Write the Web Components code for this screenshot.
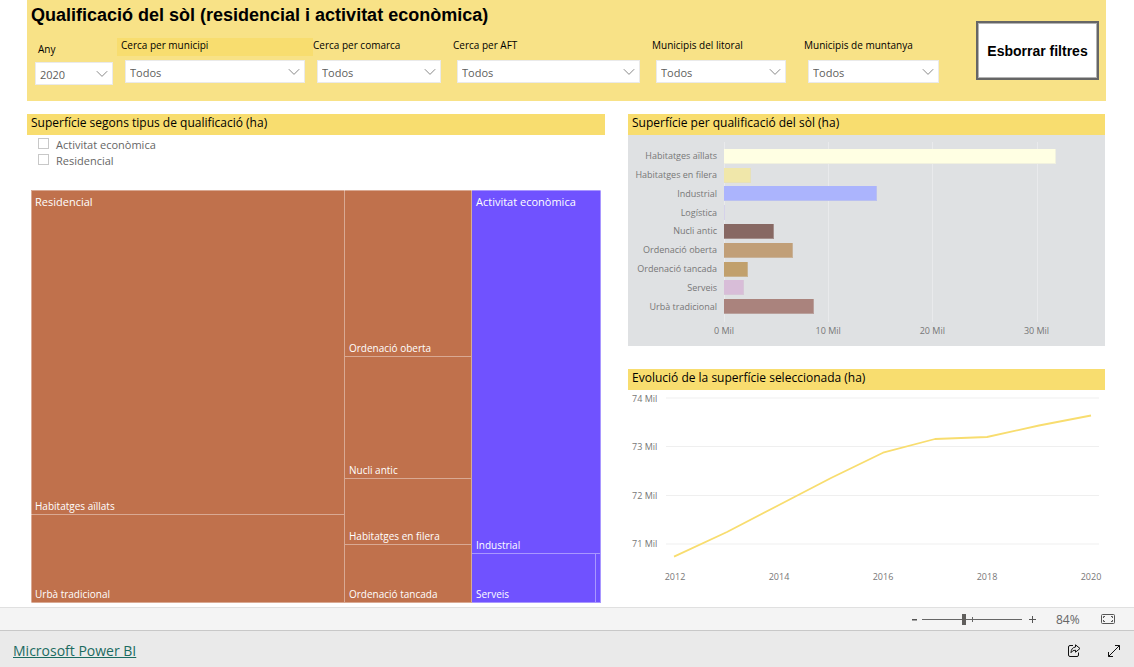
<!DOCTYPE html>
<html lang="ca">
<head>
<meta charset="utf-8">
<title>Qualificació del sòl</title>
<style>
  html, body { margin: 0; }
  body { font-family: "Open Sans", "Noto Sans", sans-serif; background: #fff; color: #000; }
</style>
</head>
<body>
<report-app></report-app>

<template id="t-report-app">
  <style>
    :host { display: flex; flex-direction: column; min-height: 100vh; }
    main { flex: 1; padding: 0 28px 4px 27px; display: flex; flex-direction: column; gap: 13px; }
    .panels { flex: 1; display: grid; grid-template-columns: 578fr 479fr; gap: 22px; }
    .right { display: flex; flex-direction: column; gap: 23px; margin: 0 1px; }
    line-chart { flex: 1; }
  </style>
  <main>
    <report-header></report-header>
    <div class="panels">
      <tree-map></tree-map>
      <div class="right">
        <bar-chart></bar-chart>
        <line-chart></line-chart>
      </div>
    </div>
  </main>
  <zoom-bar></zoom-bar>
  <brand-bar></brand-bar>
</template>

<template id="t-report-header">
  <style>
    :host { display: flex; background: #f8e287; padding: 0 7px 0 0; height: 101px; }
    .left { flex: 1; min-width: 0; }
    h1 { margin: 0; padding: 0 4px; height: 38px; font: 700 18px/31px "Liberation Sans", Arial, sans-serif; white-space: nowrap; box-sizing: border-box; }
    .filters { display: grid; grid-template-columns: 90fr 196fr 140fr 199fr 152fr 135fr; }
    .any { --start: 8px; --end: 4px; --label-start: 11px; --label-line: 18px; margin-top: 2px; }
    .mun { --start: 8px; --end: 8px; --label-start: 4px; --label-bg: #f8dd6f; }
    .lit { --end: 18px; }
    .last { --end: 0px; }
    button { width: 123px; height: 59px; margin: 21px 0 0 37px; padding: 0; background: #fff; border: 2px solid #666; box-shadow: inset 0 0 0 1px #b3b3b3; font: 700 14px "Liberation Sans", Arial, sans-serif; color: #000; white-space: nowrap; }
  </style>
  <div class="left">
    <h1>Qualificació del sòl (residencial i activitat econòmica)</h1>
    <div class="filters">
      <filter-select class="any" label="Any" value="2020"></filter-select>
      <filter-select class="mun" label="Cerca per municipi" value="Todos"></filter-select>
      <filter-select label="Cerca per comarca" value="Todos"></filter-select>
      <filter-select label="Cerca per AFT" value="Todos"></filter-select>
      <filter-select class="lit" label="Municipis del litoral" value="Todos"></filter-select>
      <filter-select class="last" label="Municipis de muntanya" value="Todos"></filter-select>
    </div>
  </div>
  <button type="button">Esborrar filtres</button>
</template>

<template id="t-filter-select">
  <style>
    :host { display: block; min-width: 0; }
    label { display: block; height: 18px; line-height: var(--label-line, 14px); font-size: 10px; padding-left: var(--label-start, 0px); background: var(--label-bg, none); white-space: nowrap; }
    .box { display: grid; margin: 4px var(--end, 12px) 0 var(--start, 4px); }
    select, svg { grid-area: 1 / 1; }
    select { appearance: none; width: 100%; height: 23px; margin: 0; padding: 1px 20px 0 4px; border: 1px solid #eaeaea; border-radius: 0; background: #fff; color: #605e5c; font: 11px "Open Sans", "Noto Sans", sans-serif; }
    svg { justify-self: end; align-self: center; margin-right: 5px; pointer-events: none; }
  </style>
  <label for="s"></label>
  <div class="box">
    <select id="s"></select>
    <svg width="12" height="8" viewBox="0 0 12 8" fill="none" stroke="#888"><path d="M.8 1.2 6 6.4 11.2 1.2"/></svg>
  </div>
</template>

<template id="t-panel-title">
  <style>
    :host { display: block; height: 21px; background: #f8dd6f; }
    h2 { margin: 0; padding-left: 4px; font-size: 12px; line-height: 18px; font-weight: 400; white-space: nowrap; }
  </style>
  <h2><slot></slot></h2>
</template>

<template id="t-tree-map">
  <style>
    :host { display: flex; flex-direction: column; }
    .checks { box-sizing: border-box; padding: 2px 11px 0; height: 55px; font-size: 11px; line-height: 16px; color: #666; }
    .checks label { display: flex; align-items: center; gap: 7px; }
    input { appearance: none; width: 11px; height: 11px; margin: 0 0 4px; border: 1px solid #c8c8c8; background: #fff; }
    .map { flex: 1; margin: 0 4px; display: grid; grid-template-columns: 314fr 127fr 129fr; color: #fff; font-size: 10px; line-height: 12px; box-shadow: inset 1px 1px #dfb8a6; }
    .res { background: #c0714c; }
    .act { background: #7052ff; }
    .col { display: grid; min-height: 0; box-shadow: inset 0 1px rgba(255,255,255,.4); }
    .first { box-shadow: inset 1px 1px rgba(255,255,255,.4); }
    .tile { min-height: 0; min-width: 0; display: flex; flex-direction: column; justify-content: flex-end; padding: 6px 4px 2px; border: solid rgba(255,255,255,.4); border-width: 0 1px 1px 0; white-space: nowrap; }
    .tile b { font-weight: 400; font-size: 11px; margin-bottom: auto; }
    .row { min-height: 0; display: grid; grid-template-columns: 124fr 5fr; }
    .logistics { padding: 0; }
  </style>
  <panel-title>Superfície segons tipus de qualificació (ha)</panel-title>
  <div class="checks">
    <label><input type="checkbox">Activitat econòmica</label>
    <label><input type="checkbox">Residencial</label>
  </div>
  <div class="map">
    <div class="col res first" style="grid-template-rows:325fr 88fr">
      <div class="tile"><b>Residencial</b>Habitatges aïllats</div>
      <div class="tile">Urbà tradicional</div>
    </div>
    <div class="col res" style="grid-template-rows:167fr 122fr 66fr 58fr">
      <div class="tile">Ordenació oberta</div>
      <div class="tile">Nucli antic</div>
      <div class="tile">Habitatges en filera</div>
      <div class="tile">Ordenació tancada</div>
    </div>
    <div class="col act" style="grid-template-rows:364fr 49fr">
      <div class="tile"><b>Activitat econòmica</b>Industrial</div>
      <div class="row">
        <div class="tile">Serveis</div>
        <div class="tile logistics"></div>
      </div>
    </div>
  </div>
</template>

<template id="t-bar-chart">
  <style>
    :host { display: flex; flex-direction: column; height: 232px; background: #dfe1e3; }
    .chart { flex: 1; display: grid; grid-template: 180px 18px / 96px 1fr; padding: 7px 6px 0 0; font-size: 9px; color: #777; }
    .rows { grid-area: 1 / 1 / 2 / 3; display: grid; grid-template-rows: repeat(9, 1fr); margin: 5px 0 6px; }
    .row { display: grid; grid-template-columns: 96px 1fr; align-items: center; line-height: 12px; min-height: 0; }
    .row span { text-align: right; padding-right: 7px; white-space: nowrap; }
    .bar { height: 15px; width: var(--w); background: var(--c); box-shadow: inset -1px -1px rgba(215,215,215,.35); }
    .lines { grid-area: 1 / 2; display: grid; grid-template-columns: repeat(3, 27.78%) 1fr; }
    .lines i { border-left: 1px solid #e9eaec; }
    .axis { grid-area: 2 / 2; display: grid; grid-template-columns: repeat(3, 27.78%) 1fr; line-height: 18px; }
    .axis span { display: flex; justify-content: center; width: 0; white-space: nowrap; }
  </style>
  <panel-title>Superfície per qualificació del sòl (ha)</panel-title>
  <div class="chart">
    <div class="lines"><i></i><i></i><i></i><i></i></div>
    <div class="rows"></div>
    <div class="axis"><span>0 Mil</span><span>10 Mil</span><span>20 Mil</span><span>30 Mil</span></div>
  </div>
</template>

<template id="t-line-chart">
  <style>
    :host { display: flex; flex-direction: column; }
    .chart { flex: 1; display: grid; grid-template: 178px 18px / 38px 1fr; padding-right: 6px; font-size: 9px; color: #777; }
    .y { height: 146px; padding: 8px 0 0 4px; display: flex; flex-direction: column; justify-content: space-between; }
    .y span { height: 0; display: flex; align-items: center; white-space: nowrap; }
    svg { display: block; width: 100%; height: 178px; }
    .x { grid-column: 2; display: flex; justify-content: space-between; margin: 0 8px 0 9px; line-height: 18px; }
    .x span { width: 0; display: flex; justify-content: center; }
  </style>
  <panel-title>Evolució de la superfície seleccionada (ha)</panel-title>
  <div class="chart">
    <div class="y"><span>74 Mil</span><span>73 Mil</span><span>72 Mil</span><span>71 Mil</span></div>
    <svg viewBox="0 0 433 178" preserveAspectRatio="none" fill="none">
      <path d="M0 8H433M0 56.5H433M0 105.5H433M0 154H433" stroke="#efefef" vector-effect="non-scaling-stroke"/>
      <path d="M8 166.6 61 142 113 115 165 88 217 62.7 269 49 321 47 373 35.5 425 25.5" stroke="#f8dd6f" stroke-width="1.8" stroke-linejoin="round" vector-effect="non-scaling-stroke"/>
    </svg>
    <div class="x"><span>2012</span><span>2014</span><span>2016</span><span>2018</span><span>2020</span></div>
  </div>
</template>

<template id="t-zoom-bar">
  <style>
    :host { display: flex; justify-content: flex-end; align-items: center; box-sizing: border-box; height: 24px; padding-right: 19px; background: #f4f4f4; border-top: 1px solid #e0e0e0; border-bottom: 1px solid #c8c8c8; font-size: 12px; color: #666; }
    button { border: 0; padding: 0; margin: 0; background: none; display: flex; color: #555; }
    input { appearance: none; width: 100px; height: 12px; margin: 0 6px 0 5px; background: linear-gradient(#666,#666) 0 6px / 100% 1px no-repeat, linear-gradient(#666,#666) 50px 4px / 1px 5px no-repeat; }
    input::-webkit-slider-thumb { appearance: none; width: 4px; height: 11px; background: #605e5c; }
    output { width: 23px; margin: 0 22px 0 19px; white-space: nowrap; }
  </style>
  <button type="button" aria-label="Allunya"><svg width="5" height="9" viewBox="0 0 5 9"><path d="M0 4h5v1.5H0z" fill="currentColor"/></svg></button>
  <input type="range" aria-label="Zoom" min="0" max="100" value="42">
  <button type="button" aria-label="Apropa"><svg width="9" height="9" viewBox="0 0 9 9"><path d="M4.5 1v7M1 4.5h7" stroke="currentColor"/></svg></button>
  <output>84%</output>
  <button type="button" aria-label="Ajusta a la pàgina"><svg width="14" height="10" viewBox="0 0 14 10" fill="none" stroke="currentColor"><rect x=".5" y=".5" width="13" height="9" rx="1"/><path d="M2.5 4V2.5H4M10 2.5h1.500V4M2.500 6v1.500H4M10 7.500h1.500V6"/></svg></button>
</template>

<template id="t-brand-bar">
  <style>
    :host { display: flex; align-items: center; box-sizing: border-box; height: 36px; padding: 4px 13px 0; background: #eaeaea; }
    a { font-size: 14px; line-height: 20px; color: #1b6b61; margin: 0 auto 0 0; text-decoration: underline; }
    button { border: 0; padding: 0; margin: 0 0 0 26px; background: none; display: flex; color: #111; }
  </style>
  <a href="#">Microsoft Power BI</a>
  <button type="button" aria-label="Comparteix"><svg width="14" height="14" viewBox="0 0 14 14" fill="none" stroke="currentColor" stroke-linejoin="round"><path d="M6 1.500H3Q1.500 1.500 1.500 3v8q0 1.500 1.500 1.500h7q1.500 0 1.500-1.500V8.500"/><path d="M8.500 .8 13 4.500 8.500 8.200V6.200Q5.500 6 4 8.700 4.200 3.600 8.500 3Z"/></svg></button>
  <button type="button" aria-label="Pantalla completa"><svg width="14" height="14" viewBox="0 0 14 14" fill="none" stroke="currentColor"><path d="M1.500 12.500 12.500 1.500M8 1.500h4.500V6M1.500 8v4.500H6"/></svg></button>
</template>

<script>
  function element(name, setup) {
    customElements.define(name, class extends HTMLElement {
      constructor() {
        super();
        const root = this.attachShadow({ mode: 'open' });
        root.append(document.getElementById('t-' + name).content.cloneNode(true));
      }
      connectedCallback() {
        if (setup && !this.ready) { this.ready = true; setup(this, this.shadowRoot); }
      }
    });
  }

  element('panel-title');
  element('filter-select', (host, root) => {
    root.querySelector('label').textContent = host.getAttribute('label');
    root.querySelector('select').add(new Option(host.getAttribute('value')));
  });
  element('report-header');
  element('tree-map');
  element('bar-chart', (host, root) => {
    const data = [
      ['Habitatges aïllats', 31.9, '#ffffe3'],
      ['Habitatges en filera', 2.6, '#f0e7aa'],
      ['Industrial', 14.7, '#abb4fd'],
      ['Logística', 0.1, '#d5d0f5'],
      ['Nucli antic', 4.8, '#876863'],
      ['Ordenació oberta', 6.6, '#c19f78'],
      ['Ordenació tancada', 2.3, '#c1a06c'],
      ['Serveis', 1.9, '#d8bdd8'],
      ['Urbà tradicional', 8.6, '#aa837d']
    ];
    const rows = root.querySelector('.rows');
    for (const [name, value, color] of data) {
      const row = document.createElement('div');
      row.className = 'row';
      const label = document.createElement('span');
      label.textContent = name;
      const bar = document.createElement('div');
      bar.className = 'bar';
      bar.style.setProperty('--w', value / 36 * 100 + '%');
      bar.style.setProperty('--c', color);
      row.append(label, bar);
      rows.append(row);
    }
  });
  element('line-chart');
  element('zoom-bar');
  element('brand-bar');
  element('report-app');
</script>
</body>
</html>
